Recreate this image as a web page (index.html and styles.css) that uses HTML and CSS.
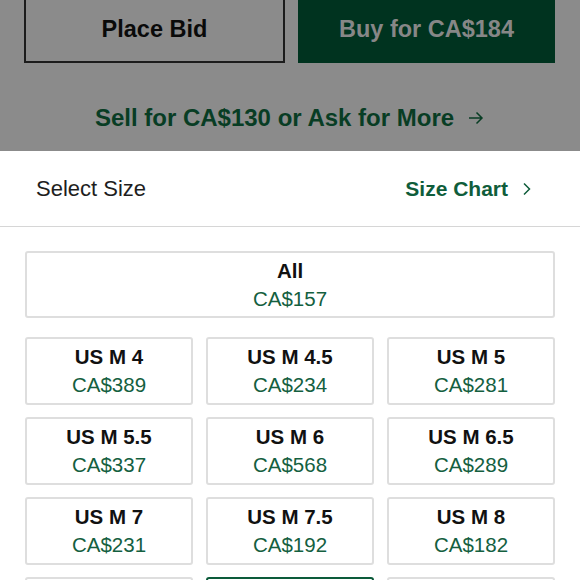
FILE: index.html
```html
<!DOCTYPE html>
<html lang="en">
<head>
    <meta charset="UTF-8">
    <meta name="viewport" content="width=device-width, initial-scale=1.0">
    <title>Select Size</title>
    <link rel="stylesheet" href="styles.css">
</head>
<body>
    <div class="buy-panel">
        <div class="actions">
            <button class="btn btn-bid">Place Bid</button>
            <button class="btn btn-buy">Buy for CA$184</button>
        </div>
        <div class="sell-link">
            <span>Sell for CA$130 or Ask for More</span>
            <svg class="arrow" width="16" height="14" viewBox="0 0 16 14">
                <path d="M1 7 H14 M8.5 1.5 L14 7 L8.5 12.5" fill="none" stroke="#083d24" stroke-width="1.5"/>
            </svg>
        </div>
    </div>

    <div class="size-header">
        <span class="size-title">Select Size</span>
        <a class="size-chart">Size Chart
            <svg width="10" height="14" viewBox="0 0 10 14">
                <path d="M2 1.5 L7.5 7 L2 12.5" fill="none" stroke="#0f5d3b" stroke-width="1.5"/>
            </svg>
        </a>
    </div>

    <div class="size-list">
        <div class="size-card size-all">
            <div class="size-name">All</div>
            <div class="size-price">CA$157</div>
        </div>
        <div class="size-grid">
            <div class="size-card"><div class="size-name">US M 4</div><div class="size-price">CA$389</div></div>
            <div class="size-card"><div class="size-name">US M 4.5</div><div class="size-price">CA$234</div></div>
            <div class="size-card"><div class="size-name">US M 5</div><div class="size-price">CA$281</div></div>
            <div class="size-card"><div class="size-name">US M 5.5</div><div class="size-price">CA$337</div></div>
            <div class="size-card"><div class="size-name">US M 6</div><div class="size-price">CA$568</div></div>
            <div class="size-card"><div class="size-name">US M 6.5</div><div class="size-price">CA$289</div></div>
            <div class="size-card"><div class="size-name">US M 7</div><div class="size-price">CA$231</div></div>
            <div class="size-card"><div class="size-name">US M 7.5</div><div class="size-price">CA$192</div></div>
            <div class="size-card"><div class="size-name">US M 8</div><div class="size-price">CA$182</div></div>
            <div class="size-card"><div class="size-name">US M 8.5</div><div class="size-price">CA$176</div></div>
            <div class="size-card selected"><div class="size-name">US M 9</div><div class="size-price">CA$184</div></div>
            <div class="size-card"><div class="size-name">US M 9.5</div><div class="size-price">CA$190</div></div>
        </div>
    </div>
</body>
</html>
```

FILE: styles.css
```css
body {
    font-family: "Liberation Sans", Arial, sans-serif;
    margin: 0;
    padding: 0;
    background-color: #fff;
    overflow: hidden;
}
.buy-panel {
    display: flow-root;
    background-color: #8b8b8b;
    height: 151px;
    padding: 0 25px 0 24px;
    box-sizing: border-box;
}
.actions {
    display: flex;
    gap: 13px;
    margin-top: -5px;
}
.btn {
    flex: 1;
    height: 68px;
    font-family: inherit;
    font-size: 23.5px;
    font-weight: bold;
    border: none;
    padding: 0;
}
.btn-bid {
    background-color: #8b8b8b;
    border: 2px solid #1c1c1c;
    color: #0a0a0a;
}
.btn-buy {
    background-color: #00331f;
    color: #878787;
}
.sell-link {
    display: flex;
    justify-content: center;
    align-items: center;
    gap: 14px;
    margin-top: 41px;
    font-size: 24px;
    font-weight: bold;
    color: #083d24;
}
.size-header {
    display: flex;
    justify-content: space-between;
    align-items: center;
    height: 75px;
    padding: 0 48px 0 36px;
    border-bottom: 1px solid #d6d6d6;
}
.size-title {
    font-size: 22px;
    color: #1e1e1e;
}
.size-chart {
    display: flex;
    align-items: center;
    gap: 14px;
    font-size: 21px;
    font-weight: bold;
    color: #0f5d3b;
}
.size-list {
    padding: 24px 25px;
}
.size-card {
    display: flex;
    flex-direction: column;
    justify-content: center;
    align-items: center;
    height: 68px;
    border: 2px solid #dedede;
    border-radius: 3px;
    box-sizing: border-box;
    line-height: 28px;
}
.size-all {
    height: 67px;
    margin-bottom: 19px;
}
.size-grid {
    display: grid;
    grid-template-columns: repeat(3, 1fr);
    column-gap: 13px;
    row-gap: 12px;
}
.size-name {
    font-size: 20.5px;
    font-weight: bold;
    color: #111;
}
.size-price {
    font-size: 20.5px;
    color: #14603f;
}
.size-card.selected {
    border-color: #0c5b3a;
}
```
